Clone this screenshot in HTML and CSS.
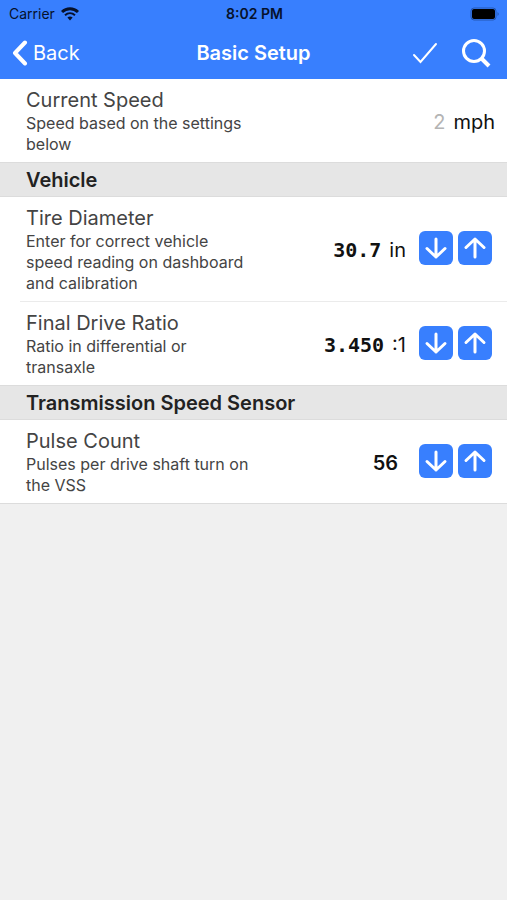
FILE: index.html
```html
<!DOCTYPE html>
<html lang="en">
<head>
  <meta charset="UTF-8">
  <meta name="viewport" content="width=device-width, initial-scale=1.0">
  <title>Basic Setup</title>
  <link rel="stylesheet" href="styles.css">
</head>
<body>
  <header class="header">
    <div class="status-bar">
      <div class="carrier">
        <span>Carrier</span>
        <svg width="18" height="14" viewBox="0 0 18 14" fill="none" stroke="#06112b" stroke-width="3">
          <path d="M1 5 C5.5 0.6 12.5 0.6 17 5"/>
          <path d="M4 8.3 C7 5.6 11 5.6 14 8.3" stroke-width="2"/>
          <path d="M6.4 10.6 Q9 8.4 11.6 10.6 L9 13.4 Z" fill="#06112b" stroke="none"/>
        </svg>
      </div>
      <time class="clock">8:02 PM</time>
      <svg class="battery" width="30" height="14" viewBox="0 0 30 14">
        <rect x="1" y="1" width="25" height="12" rx="3" fill="none" stroke="#2458b4"/>
        <rect x="2" y="2" width="23" height="10" rx="2" fill="#000"/>
        <path d="M27.5 5 Q30 7 27.5 9 Z" fill="#2458b4"/>
      </svg>
    </div>
    <nav class="nav-bar">
      <a class="back" href="#">
        <svg width="16" height="26" viewBox="0 0 16 26" fill="none" stroke="#fff" stroke-width="4" stroke-linecap="round" stroke-linejoin="round">
          <path d="M13 2.5 L3 13 L13 23.5"/>
        </svg>
        Back
      </a>
      <h1>Basic Setup</h1>
      <div class="actions">
        <button type="button" aria-label="Save">
          <svg width="26" height="22" viewBox="0 0 26 22" fill="none" stroke="#fff" stroke-width="2" stroke-linecap="round">
            <path d="M2 13 L8.5 20 L24 2"/>
          </svg>
        </button>
        <button type="button" aria-label="Search">
          <svg width="30" height="30" viewBox="0 0 30 30" fill="none" stroke="#fff" stroke-width="3">
            <circle cx="13" cy="13" r="10.5"/>
            <path d="M20.5 20.5 L28 28" stroke-width="4"/>
          </svg>
        </button>
      </div>
    </nav>
  </header>

  <main>
    <section>
      <div class="row">
        <div class="info">
          <label for="speed">Current Speed</label>
          <p>Speed based on the settings below</p>
        </div>
        <div class="value readonly">
          <input id="speed" type="text" value="2" readonly>
          <span>mph</span>
        </div>
      </div>
    </section>

    <section>
      <h2>Vehicle</h2>
      <div class="row inset">
        <div class="info">
          <label for="tire">Tire Diameter</label>
          <p>Enter for correct vehicle speed reading on dashboard and calibration</p>
        </div>
        <div class="value decimal">
          <input id="tire" type="text" value="30.7">
          <span>in</span>
        </div>
        <div class="stepper">
          <button type="button" aria-label="Decrease tire diameter">
            <svg viewBox="0 0 34 34"><path d="M17 8 V26 M8 17.5 L17 26 L26 17.5"/></svg>
          </button>
          <button type="button" aria-label="Increase tire diameter">
            <svg viewBox="0 0 34 34"><path d="M17 26 V8 M8 16.5 L17 8 L26 16.5"/></svg>
          </button>
        </div>
      </div>
      <div class="row">
        <div class="info">
          <label for="ratio">Final Drive Ratio</label>
          <p>Ratio in differential or transaxle</p>
        </div>
        <div class="value decimal">
          <input id="ratio" type="text" value="3.450">
          <span>:1</span>
        </div>
        <div class="stepper">
          <button type="button" aria-label="Decrease final drive ratio">
            <svg viewBox="0 0 34 34"><path d="M17 8 V26 M8 17.5 L17 26 L26 17.5"/></svg>
          </button>
          <button type="button" aria-label="Increase final drive ratio">
            <svg viewBox="0 0 34 34"><path d="M17 26 V8 M8 16.5 L17 8 L26 16.5"/></svg>
          </button>
        </div>
      </div>
    </section>

    <section>
      <h2>Transmission Speed Sensor</h2>
      <div class="row">
        <div class="info">
          <label for="pulse">Pulse Count</label>
          <p>Pulses per drive shaft turn on the VSS</p>
        </div>
        <div class="value">
          <input id="pulse" type="text" value="56">
          <span></span>
        </div>
        <div class="stepper">
          <button type="button" aria-label="Decrease pulse count">
            <svg viewBox="0 0 34 34"><path d="M17 8 V26 M8 17.5 L17 26 L26 17.5"/></svg>
          </button>
          <button type="button" aria-label="Increase pulse count">
            <svg viewBox="0 0 34 34"><path d="M17 26 V8 M8 16.5 L17 8 L26 16.5"/></svg>
          </button>
        </div>
      </div>
    </section>
  </main>
</body>
</html>
```

FILE: styles.css
```css
* {
  box-sizing: border-box;
}

body {
  margin: 0;
  font-family: Inter, "Liberation Sans", sans-serif;
  background: #f0f0f0;
  color: #111;
}

h1,
h2,
p {
  margin: 0;
}

button {
  padding: 0;
  border: none;
  background: none;
  cursor: pointer;
}

svg {
  display: block;
}

.header {
  background: #387ffe;
  color: #fff;
}

.status-bar,
.nav-bar {
  display: grid;
  grid-template-columns: 1fr auto 1fr;
  align-items: center;
}

.status-bar {
  height: 27px;
  padding: 0 7px 0 9px;
  font-size: 14px;
  color: #06112b;
}

.carrier {
  display: flex;
  align-items: center;
  gap: 6px;
}

.clock {
  font-weight: 600;
}

.battery {
  justify-self: end;
}

.nav-bar {
  height: 52px;
  padding: 0 12px;
}

.back {
  display: flex;
  align-items: center;
  gap: 5px;
  font-size: 20px;
  color: #fff;
  text-decoration: none;
}

h1 {
  font-size: 20px;
  font-weight: 600;
}

.actions {
  display: flex;
  align-items: center;
  justify-content: flex-end;
  gap: 23px;
  padding-right: 4px;
}

h2 {
  padding: 1px 26px 0;
  border-bottom: 1px solid #dcdcdc;
  background: #e6e6e6;
  font-size: 20px;
  font-weight: 600;
  line-height: 32px;
  color: #222;
}

.row {
  display: flex;
  align-items: center;
  padding: 9px 12px 7px 26px;
  border-bottom: 1px solid #dcdcdc;
  background: #fff;
}

/* divider between rows of one group starts short of the left edge */
.row.inset {
  padding-bottom: 8px;
  border-bottom: none;
  background: linear-gradient(#ebebeb, #ebebeb) 20px 100% / 100% 1px no-repeat #fff;
}

.info {
  flex: 1;
  color: #444;
}

.info label {
  display: block;
  font-size: 20px;
  line-height: 25px;
}

.info p {
  max-width: 232px;
  font-size: 16px;
  line-height: 21px;
}

.value {
  display: flex;
  align-items: center;
  gap: 8px;
  font-size: 20px;
}

.value input {
  width: 80px;
  padding: 0;
  border: none;
  outline: none;
  background: none;
  font: inherit;
  font-weight: 600;
  text-align: right;
  color: #111;
}

.value.decimal input {
  font-family: "DejaVu Sans Mono", monospace;
  font-weight: 700;
}

.value.readonly input {
  font-weight: 400;
  color: #b4b4b4;
}

.stepper {
  display: flex;
  gap: 5px;
  padding: 0 3px 4px 13px;
}

.stepper button {
  width: 34px;
  height: 34px;
  border-radius: 6px;
  background: #387ffe;
}

.stepper svg {
  fill: none;
  stroke: #fff;
  stroke-width: 3;
  stroke-linecap: round;
  stroke-linejoin: round;
}
```
